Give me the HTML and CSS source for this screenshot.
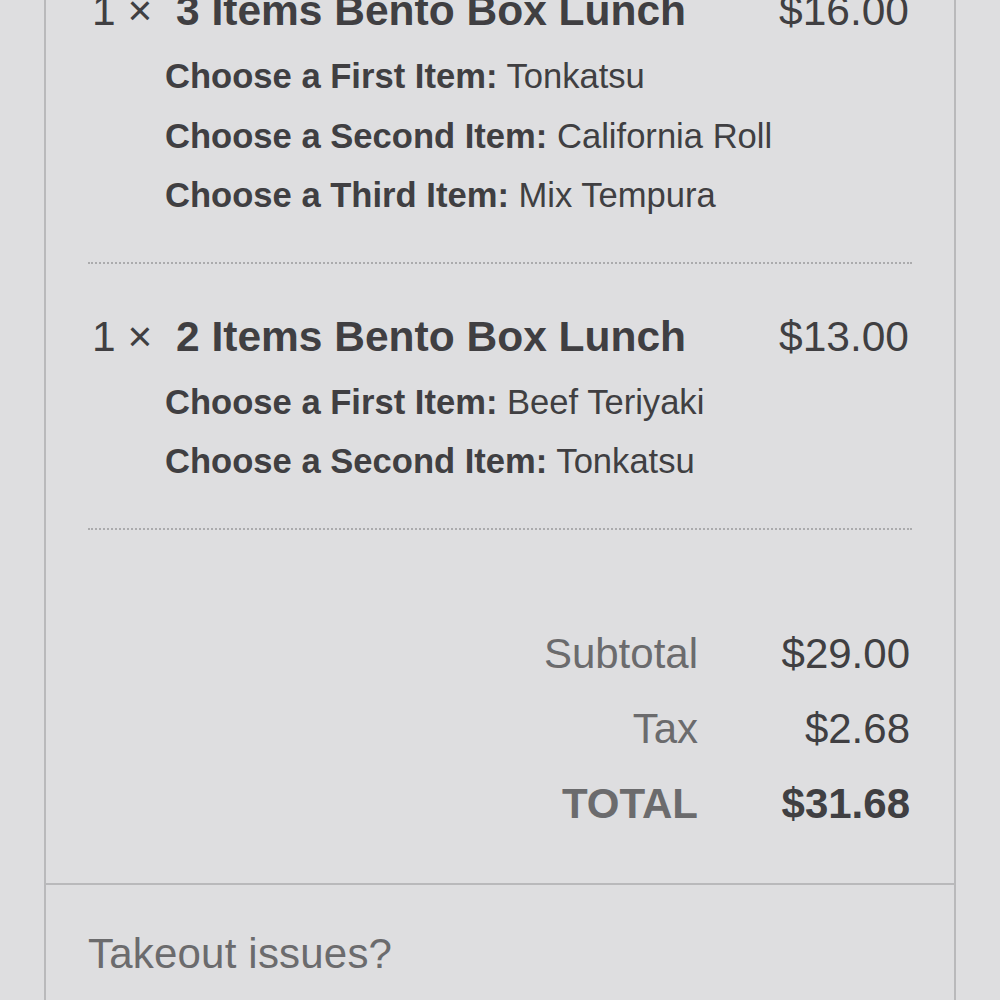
FILE: index.html
```html
<!DOCTYPE html>
<html>
<head>
  <meta charset="utf-8">
  <link rel="stylesheet" href="styles.css">
</head>
<body>

<div class="receipt">
  <div class="items">
    <div class="item first">
      <div class="item-row">
        <span class="qty">1 &times;</span>
        <span class="name">3 Items Bento Box Lunch</span>
        <span class="price">$16.00</span>
      </div>
      <div class="options">
        <div class="option"><b>Choose a First Item:</b> Tonkatsu</div>
        <div class="option"><b>Choose a Second Item:</b> California Roll</div>
        <div class="option"><b>Choose a Third Item:</b> Mix Tempura</div>
      </div>
    </div>

    <div class="item">
      <div class="item-row">
        <span class="qty">1 &times;</span>
        <span class="name">2 Items Bento Box Lunch</span>
        <span class="price">$13.00</span>
      </div>
      <div class="options">
        <div class="option"><b>Choose a First Item:</b> Beef Teriyaki</div>
        <div class="option"><b>Choose a Second Item:</b> Tonkatsu</div>
      </div>
    </div>
  </div>

  <div class="totals">
    <div class="label">Subtotal</div>
    <div class="value">$29.00</div>
    <div class="label">Tax</div>
    <div class="value">$2.68</div>
    <div class="label grand">TOTAL</div>
    <div class="value grand">$31.68</div>
  </div>

  <div class="help">
    <span class="help-text">Takeout issues?</span>
  </div>
</div>

</body>
</html>
```

FILE: styles.css
```css
body {
  margin: 0;
  background-color: #dedee0;
  font-family: "Liberation Sans", Arial, sans-serif;
  color: #403f42;
}
.receipt {
  margin: -15px 44px 0;
  border-left: 2px solid #b9b9bb;
  border-right: 2px solid #b9b9bb;
  min-height: 1100px;
}
.items {
  padding: 0 42px;
}
.item {
  padding: 47px 0 36px;
  border-bottom: 2px dotted #ababad;
}
.item.first {
  padding-top: 0;
}
.item-row {
  display: flex;
  font-size: 42.5px;
  line-height: 52px;
  margin-bottom: 10px;
}
.qty {
  width: 84px;
  padding-left: 4px;
  flex: none;
}
.name {
  font-weight: bold;
}
.price {
  margin-left: auto;
  padding-right: 3px;
}
.options {
  padding-left: 77px;
}
.option {
  font-size: 34.6px;
  line-height: 59.5px;
}
.totals {
  display: grid;
  grid-template-columns: 1fr 212px;
  padding: 86px 44px 42px 42px;
  font-size: 42px;
  line-height: 75px;
  text-align: right;
}
.label {
  color: #6b6b6d;
}
.grand {
  font-weight: bold;
}
.help {
  border-top: 2px solid #b9b9bb;
  padding: 45px 42px;
}
.help-text {
  font-size: 42px;
  letter-spacing: 0.2px;
  color: #6b6b6d;
}
```
